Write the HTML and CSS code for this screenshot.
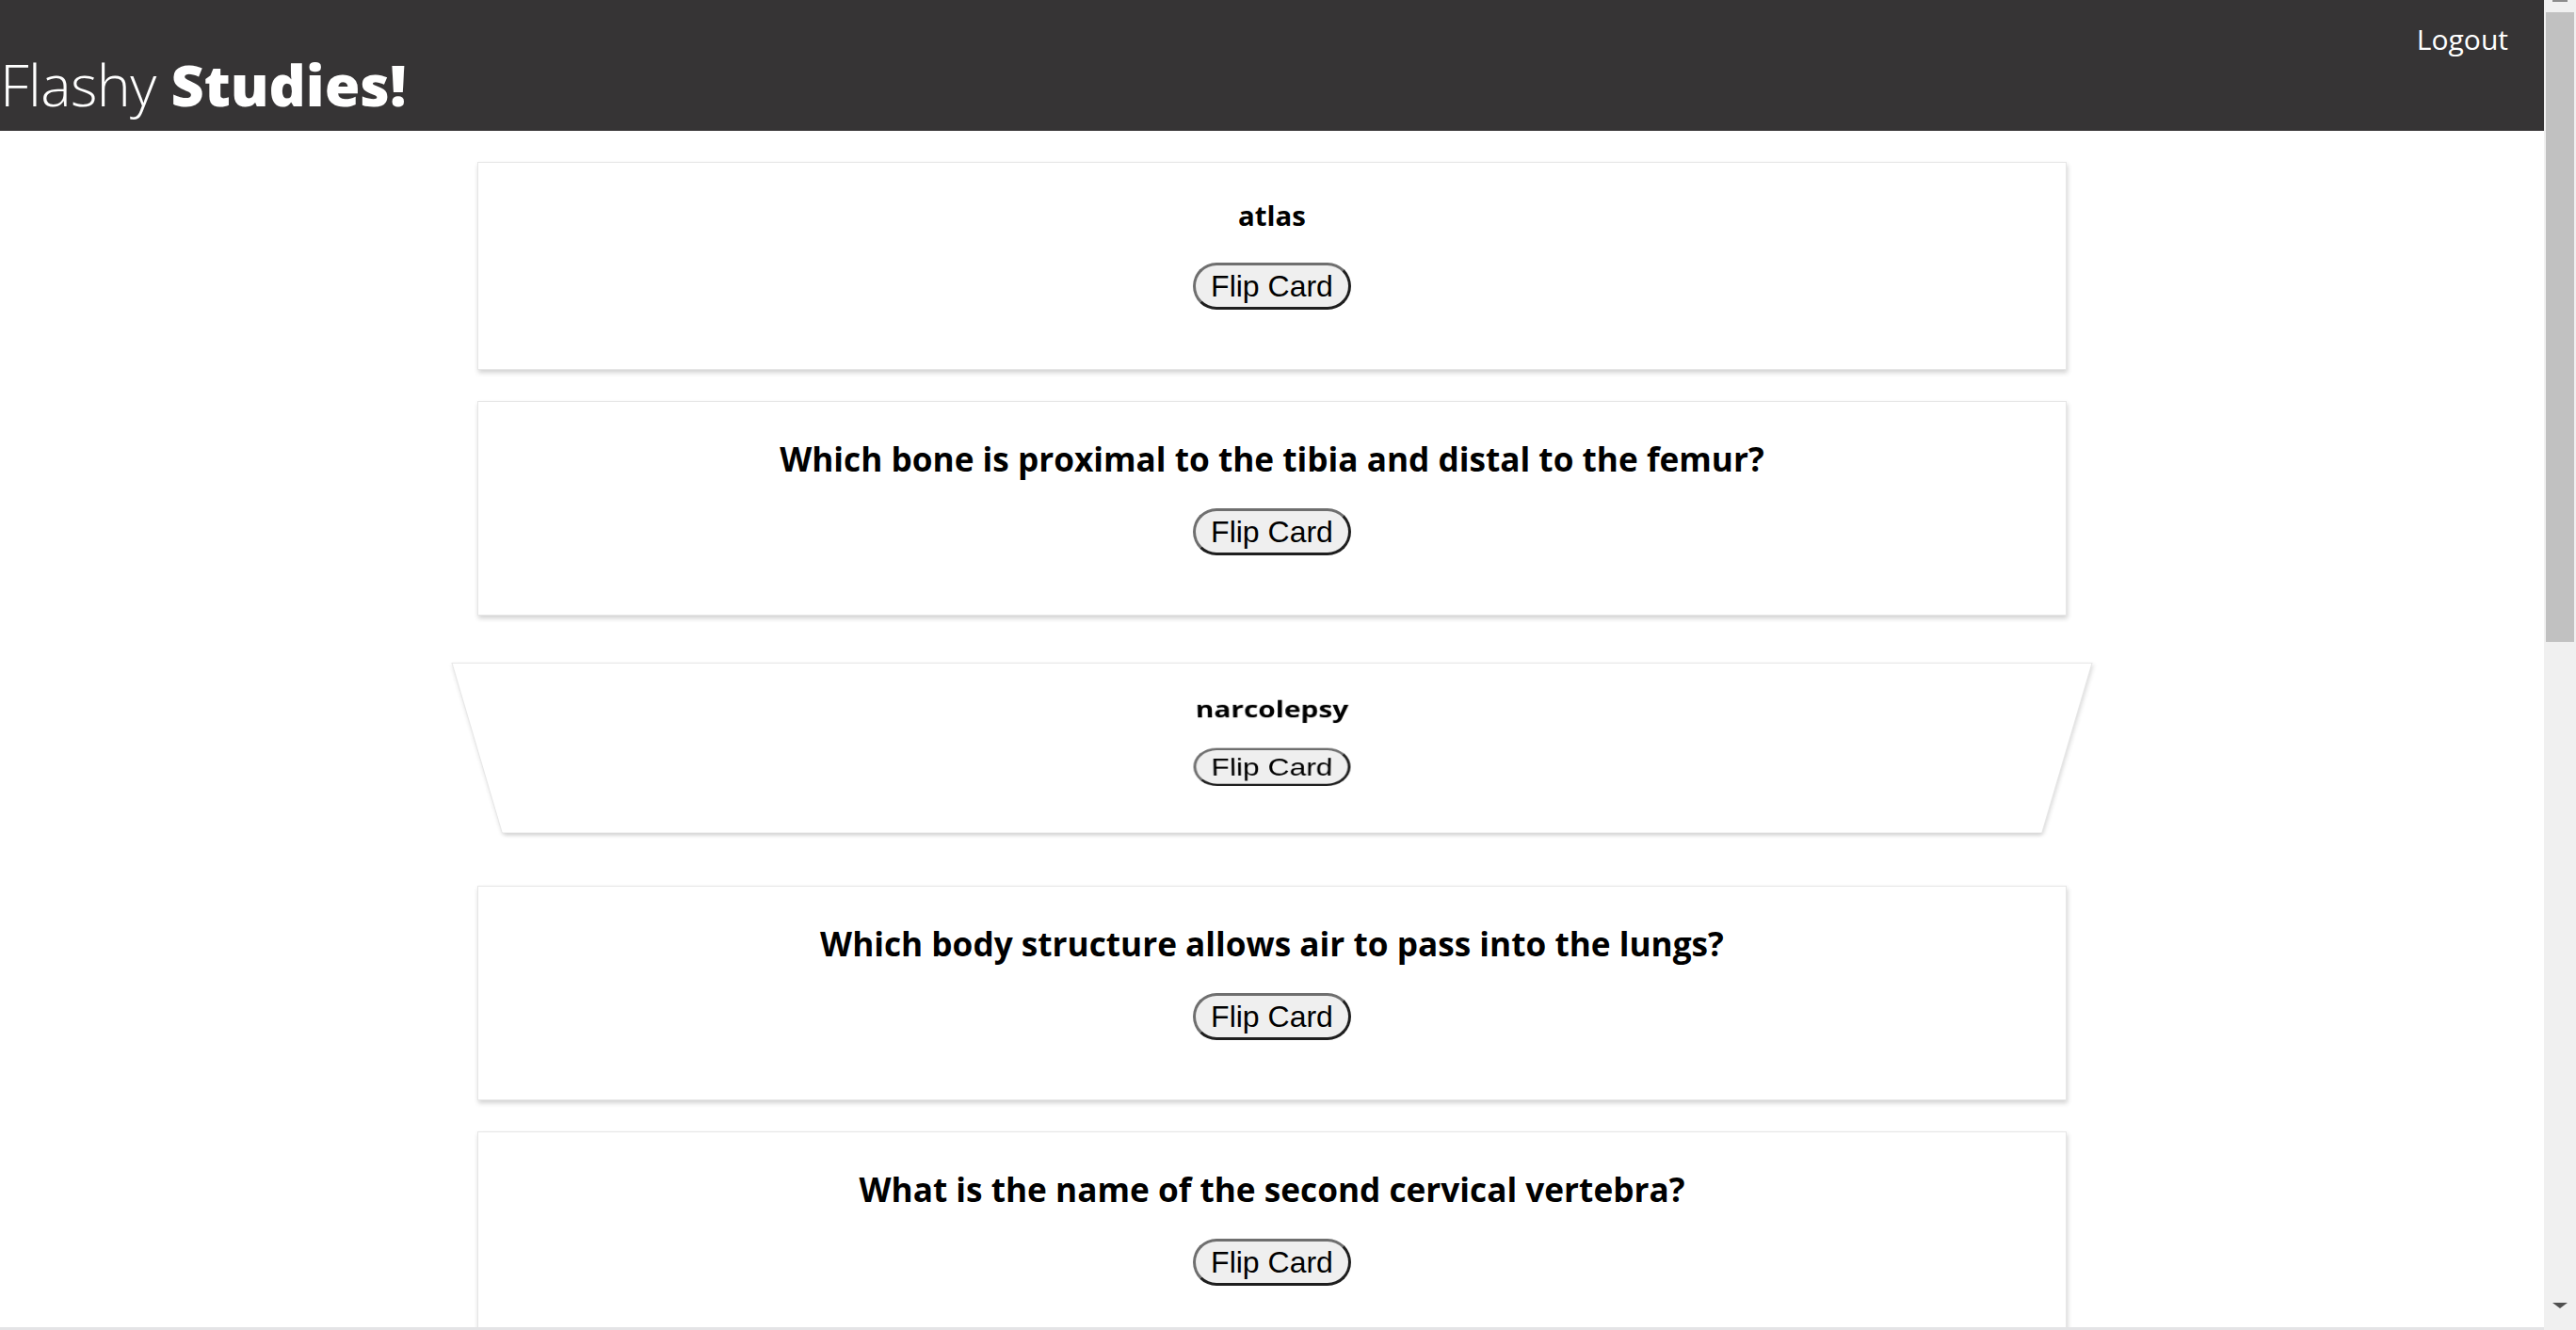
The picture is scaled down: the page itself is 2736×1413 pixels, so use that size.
FILE: index.html
```html
<!DOCTYPE html>
<html lang="en">
<head>
<meta charset="utf-8">
<title>Flashy Studies!</title>
<link rel="stylesheet" href="styles.css">
</head>
<body>
<div class="app">
  <div class="viewport">
    <header class="topbar">
      <h1 class="brand"><span class="brand-light">Flashy</span> <span class="brand-heavy">Studies!</span></h1>
      <a class="logout" href="#">Logout</a>
    </header>
    <main class="deck">
      <section class="card">
        <h3 class="card-answer">atlas</h3>
        <button class="flip">Flip Card</button>
      </section>
      <section class="card">
        <h2 class="card-question">Which bone is proximal to the tibia and distal to the femur?</h2>
        <button class="flip">Flip Card</button>
      </section>
      <section class="card card-flipping">
        <h3 class="card-answer">narcolepsy</h3>
        <button class="flip">Flip Card</button>
      </section>
      <section class="card">
        <h2 class="card-question">Which body structure allows air to pass into the lungs?</h2>
        <button class="flip">Flip Card</button>
      </section>
      <section class="card">
        <h2 class="card-question">What is the name of the second cervical vertebra?</h2>
        <button class="flip">Flip Card</button>
      </section>
    </main>
    <div class="hstrip"></div>
  </div>
  <div class="vscroll">
    <div class="vscroll-nub"></div>
    <div class="vscroll-thumb"></div>
    <div class="vscroll-fill"></div>
    <div class="vscroll-down"></div>
  </div>
</div>
</body>
</html>
```
FILE: styles.css
```css
html, body {
  margin: 0;
  padding: 0;
  height: 1413px;
  overflow: hidden;
  background: #ffffff;
  font-family: "Open Sans", "Noto Sans", sans-serif;
}

.app {
  display: flex;
  height: 1413px;
}

.viewport {
  flex: 1;
  display: flex;
  flex-direction: column;
  overflow: hidden;
  min-width: 0;
}

.topbar {
  flex: none;
  height: 139px;
  background: #363435;
  display: flex;
  justify-content: space-between;
  align-items: flex-start;
  color: #ffffff;
}

.brand {
  margin: 59px 0 0 0;
  font-size: 61px;
  line-height: 61px;
  font-weight: 300;
  white-space: nowrap;
}

.brand-light {
  font-weight: 300;
  letter-spacing: -0.6px;
}

.brand-heavy {
  font-weight: 800;
}

.logout {
  margin: 27px 38px 0 0;
  font-size: 30px;
  line-height: 30px;
  color: #ffffff;
  text-decoration: none;
}

.deck {
  flex: 1;
  display: flex;
  flex-direction: column;
  align-items: center;
  gap: 33px;
  padding-top: 33px;
  overflow: hidden;
  min-height: 0;
}

.card {
  flex: none;
  width: 1688px;
  box-sizing: border-box;
  background: #ffffff;
  border: 1px solid #e6e6e6;
  box-shadow: 1px 3px 5px rgba(0, 0, 0, 0.18);
  padding: 36px 0 63px;
  text-align: center;
}

.card-flipping {
  transform: perspective(2000px) rotateX(-35deg);
}

.card-answer,
.card-question {
  margin: 0 0 30px 0;
  font-weight: 700;
  color: #000000;
  line-height: normal;
}

.card-answer {
  font-size: 29.4px;
}

.card-question {
  font-size: 35.2px;
  margin-bottom: 29px;
}

.flip {
  font-family: "Liberation Sans", Arial, sans-serif;
  font-size: 32px;
  line-height: 37px;
  color: #000000;
  background: #efefef;
  border-style: solid;
  border-width: 3px;
  border-color: #6f6f6f #1f1f1f #1f1f1f #6f6f6f;
  border-radius: 26px;
  padding: 4px 16px 3px;
  margin: 0;
}

.hstrip {
  flex: none;
  height: 3px;
  background: #e4e4e6;
}

.vscroll {
  flex: none;
  width: 34px;
  background: #f0f0f0;
  display: flex;
  flex-direction: column;
  align-items: center;
}

.vscroll-nub {
  width: 16px;
  height: 2px;
  background: #8c8c8c;
}

.vscroll-thumb {
  width: 30px;
  height: 669px;
  margin-top: 11px;
  background: #c1c1c1;
}

.vscroll-fill {
  flex: 1;
}

.vscroll-down {
  width: 0;
  height: 0;
  border-top: 6px solid #505050;
  border-left: 8px solid transparent;
  border-right: 8px solid transparent;
  margin-bottom: 23px;
}
```
